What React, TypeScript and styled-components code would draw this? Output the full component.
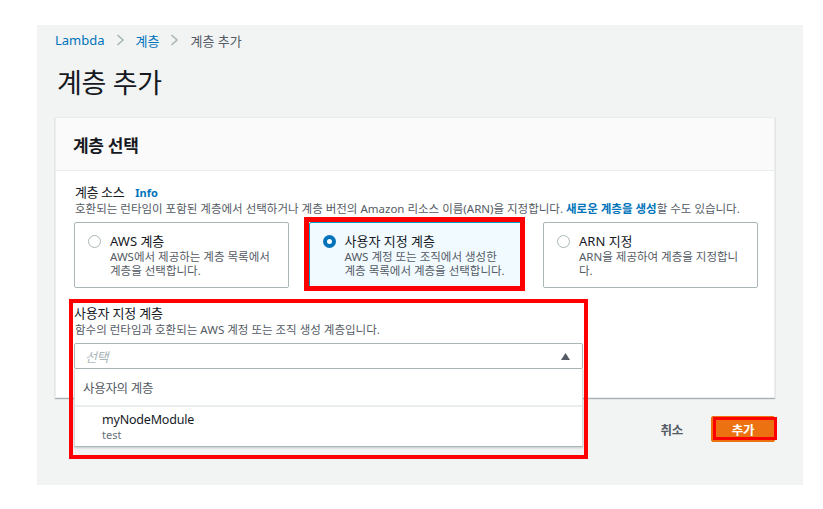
import styled, { createGlobalStyle, css } from "styled-components";

const GlobalStyle = createGlobalStyle`
  html, body {
    margin: 0;
    padding: 0;
    background: #ffffff;
  }
  body {
    font-family: "Noto Sans", "Noto Sans CJK KR", sans-serif;
    color: #16191f;
  }
  * {
    box-sizing: border-box;
  }
`;

const Page = styled.div`
  padding: 25px 0 0 37px;
`;

const Shell = styled.main`
  width: 766px;
  height: 460px;
  background: #f2f3f3;
  padding: 6px 28px 0 18px;
`;

const Crumbs = styled.nav`
  display: flex;
  align-items: center;
  gap: 11px;
  height: 18px;
  font-size: 13px;
  letter-spacing: 0;
`;

const Crumb = styled.span<{ $current?: boolean }>`
  color: ${(p) => (p.$current ? "#545b64" : "#0073bb")};
`;

const Chevron = () => (
  <svg width="9" height="12" viewBox="0 0 9 12">
    <path d="M1.5 1 L7 6 L1.5 11" fill="none" stroke="#aab7b8" strokeWidth="1.6" />
  </svg>
);

const Title = styled.h1`
  margin: 17px 0 0;
  font-size: 27px;
  line-height: 34px;
  font-weight: 400;
  letter-spacing: -0.3px;
  padding-left: 2px;
`;

const Panel = styled.section`
  margin-top: 17px;
  width: 720px;
  height: 281px;
  background: #ffffff;
  border: 1px solid #eaeded;
  box-shadow: 0 1px 1px rgba(0, 28, 36, 0.3);
`;

const PanelHeader = styled.header`
  height: 53px;
  display: flex;
  align-items: center;
  padding: 0 17px;
  background: #fafafa;
  border-bottom: 1px solid #eaeded;
  font-size: 17px;
  font-weight: 700;
  letter-spacing: -0.3px;
`;

const PanelBody = styled.div`
  padding: 12px 18px 0 18px;
`;

const Label = styled.div`
  display: flex;
  align-items: baseline;
  gap: 11px;
  font-size: 13px;
  line-height: 18px;
  letter-spacing: -0.4px;
  padding-left: 1px;
`;

const Info = styled.span`
  color: #0073bb;
  font-size: 11px;
  font-weight: 700;
  letter-spacing: 0;
`;

const Hint = styled.div`
  font-size: 11.5px;
  line-height: 14px;
  color: #545b64;
  letter-spacing: 0;
  padding-left: 1px;
  white-space: nowrap;
`;

const HintLink = styled.span`
  color: #0073bb;
  font-weight: 700;
`;

const Tiles = styled.div`
  margin-top: 6px;
  display: grid;
  grid-template-columns: 215px 215px 215px;
  column-gap: 19.5px;
`;

const Tile = styled.div<{ $selected?: boolean; $marked?: boolean }>`
  position: relative;
  height: 66px;
  display: flex;
  gap: 9px;
  padding: 9px 12px 0 13px;
  border: 1px solid ${(p) => (p.$selected ? "#00a1c9" : "#aab7b8")};
  border-radius: 2px;
  background: ${(p) => (p.$selected ? "#f1faff" : "#ffffff")};
  ${(p) =>
    p.$marked &&
    css`
      &::after {
        content: "";
        position: absolute;
        top: -6px;
        left: -6px;
        right: -2px;
        bottom: -4px;
        border: 5px solid #ff0000;
      }
    `}
`;

const Radio = styled.span<{ $checked?: boolean }>`
  flex: none;
  width: 13px;
  height: 13px;
  margin-top: 3px;
  border-radius: 50%;
  background: #ffffff;
  border: ${(p) => (p.$checked ? "4px solid #0073bb" : "1px solid #aab7b8")};
`;

const TileText = styled.div`
  display: flex;
  flex-direction: column;
`;

const TileTitle = styled.div`
  font-size: 13px;
  line-height: 18px;
  letter-spacing: 0;
`;

const TileDesc = styled.div`
  font-size: 11.5px;
  line-height: 13.5px;
  color: #545b64;
  letter-spacing: 0;
  white-space: nowrap;
`;

const Field = styled.div`
  position: relative;
  margin-top: 16px;
  width: 509px;
`;

const Marker = styled.div`
  position: absolute;
  top: -5px;
  left: -5px;
  right: -5px;
  bottom: -90px;
  border: 4px solid #ff0000;
  pointer-events: none;
  z-index: 3;
`;

const FieldLabel = styled.div`
  font-size: 13px;
  line-height: 18px;
  letter-spacing: -0.2px;
`;

const FieldHint = styled(Hint)`
  margin-top: 1px;
`;

const SelectWrap = styled.div`
  position: relative;
  margin-top: 6px;
`;

const SelectBox = styled.div`
  height: 26px;
  display: flex;
  align-items: center;
  justify-content: space-between;
  padding: 0 12px 0 10px;
  border: 1px solid #aab7b8;
  border-radius: 2px;
  background: #ffffff;
`;

const Placeholder = styled.span`
  font-size: 13px;
  font-style: italic;
  color: #aab7b8;
  letter-spacing: -0.5px;
`;

const Caret = () => (
  <svg width="9" height="7" viewBox="0 0 9 7">
    <path d="M4.5 0 L9 7 L0 7 Z" fill="#545b64" />
  </svg>
);

const Dropdown = styled.div`
  position: absolute;
  top: 100%;
  left: 0;
  right: 0;
  background: #ffffff;
  border: 1px solid #d5dbdb;
  border-top: none;
  border-bottom: 1px solid #aab7b8;
  box-shadow: 0 1px 2px rgba(0, 28, 36, 0.2);
  z-index: 2;
`;

const GroupHead = styled.div`
  height: 38px;
  display: flex;
  align-items: center;
  padding-left: 8px;
  font-size: 12.5px;
  color: #545b64;
  letter-spacing: -0.3px;
  border-bottom: 2px solid #eaeded;
`;

const Option = styled.div`
  height: 39px;
  padding: 4px 0 0 27px;
  display: flex;
  flex-direction: column;
`;

const OptionName = styled.span`
  font-size: 12.5px;
  line-height: 17px;
  color: #16191f;
  letter-spacing: -0.2px;
`;

const OptionSub = styled.span`
  font-size: 11px;
  line-height: 14px;
  color: #687078;
`;

const Actions = styled.div`
  margin-top: 18px;
  width: 720px;
  display: flex;
  justify-content: flex-end;
  align-items: center;
  gap: 8px;
`;

const LinkButton = styled.button`
  height: 26px;
  padding: 0 20px;
  border: none;
  background: transparent;
  font-family: inherit;
  font-size: 12.5px;
  font-weight: 700;
  color: #545b64;
  letter-spacing: -0.3px;
`;

const PrimaryButton = styled.button`
  position: relative;
  width: 64px;
  height: 26px;
  border: 1px solid #ec7211;
  border-radius: 2px;
  background: #ec7211;
  font-family: inherit;
  font-size: 12.5px;
  font-weight: 700;
  color: #ffffff;
  letter-spacing: -0.3px;
  &::after {
    content: "";
    position: absolute;
    top: 0;
    left: 1px;
    right: -3px;
    bottom: 1px;
    border: 3px solid #ff0000;
  }
`;

const tiles = [
  {
    title: "AWS 계층",
    desc: ["AWS에서 제공하는 계층 목록에서", "계층을 선택합니다."],
  },
  {
    title: "사용자 지정 계층",
    desc: ["AWS 계정 또는 조직에서 생성한", "계층 목록에서 계층을 선택합니다."],
    selected: true,
  },
  {
    title: "ARN 지정",
    desc: ["ARN을 제공하여 계층을 지정합니", "다."],
  },
];

export default function App() {
  return (
    <>
      <GlobalStyle />
      <Page>
        <Shell>
          <Crumbs>
            <Crumb>Lambda</Crumb>
            <Chevron />
            <Crumb>계층</Crumb>
            <Chevron />
            <Crumb $current>계층 추가</Crumb>
          </Crumbs>
          <Title>계층 추가</Title>

          <Panel>
            <PanelHeader>계층 선택</PanelHeader>
            <PanelBody>
              <Label>
                계층 소스 <Info>Info</Info>
              </Label>
              <Hint>
                호환되는 런타임이 포함된 계층에서 선택하거나 계층 버전의 Amazon 리소스 이름(ARN)을 지정합니다.{" "}
                <HintLink>새로운 계층을 생성</HintLink>할 수도 있습니다.
              </Hint>

              <Tiles>
                {tiles.map((t) => (
                  <Tile key={t.title} $selected={t.selected} $marked={t.selected}>
                    <Radio $checked={t.selected} />
                    <TileText>
                      <TileTitle>{t.title}</TileTitle>
                      <TileDesc>
                        {t.desc[0]}
                        <br />
                        {t.desc[1]}
                      </TileDesc>
                    </TileText>
                  </Tile>
                ))}
              </Tiles>

              <Field>
                <Marker />
                <FieldLabel>사용자 지정 계층</FieldLabel>
                <FieldHint>함수의 런타임과 호환되는 AWS 계정 또는 조직 생성 계층입니다.</FieldHint>
                <SelectWrap>
                  <SelectBox>
                    <Placeholder>선택</Placeholder>
                    <Caret />
                  </SelectBox>
                  <Dropdown>
                    <GroupHead>사용자의 계층</GroupHead>
                    <Option>
                      <OptionName>myNodeModule</OptionName>
                      <OptionSub>test</OptionSub>
                    </Option>
                  </Dropdown>
                </SelectWrap>
              </Field>
            </PanelBody>
          </Panel>

          <Actions>
            <LinkButton>취소</LinkButton>
            <PrimaryButton>추가</PrimaryButton>
          </Actions>
        </Shell>
      </Page>
    </>
  );
}
